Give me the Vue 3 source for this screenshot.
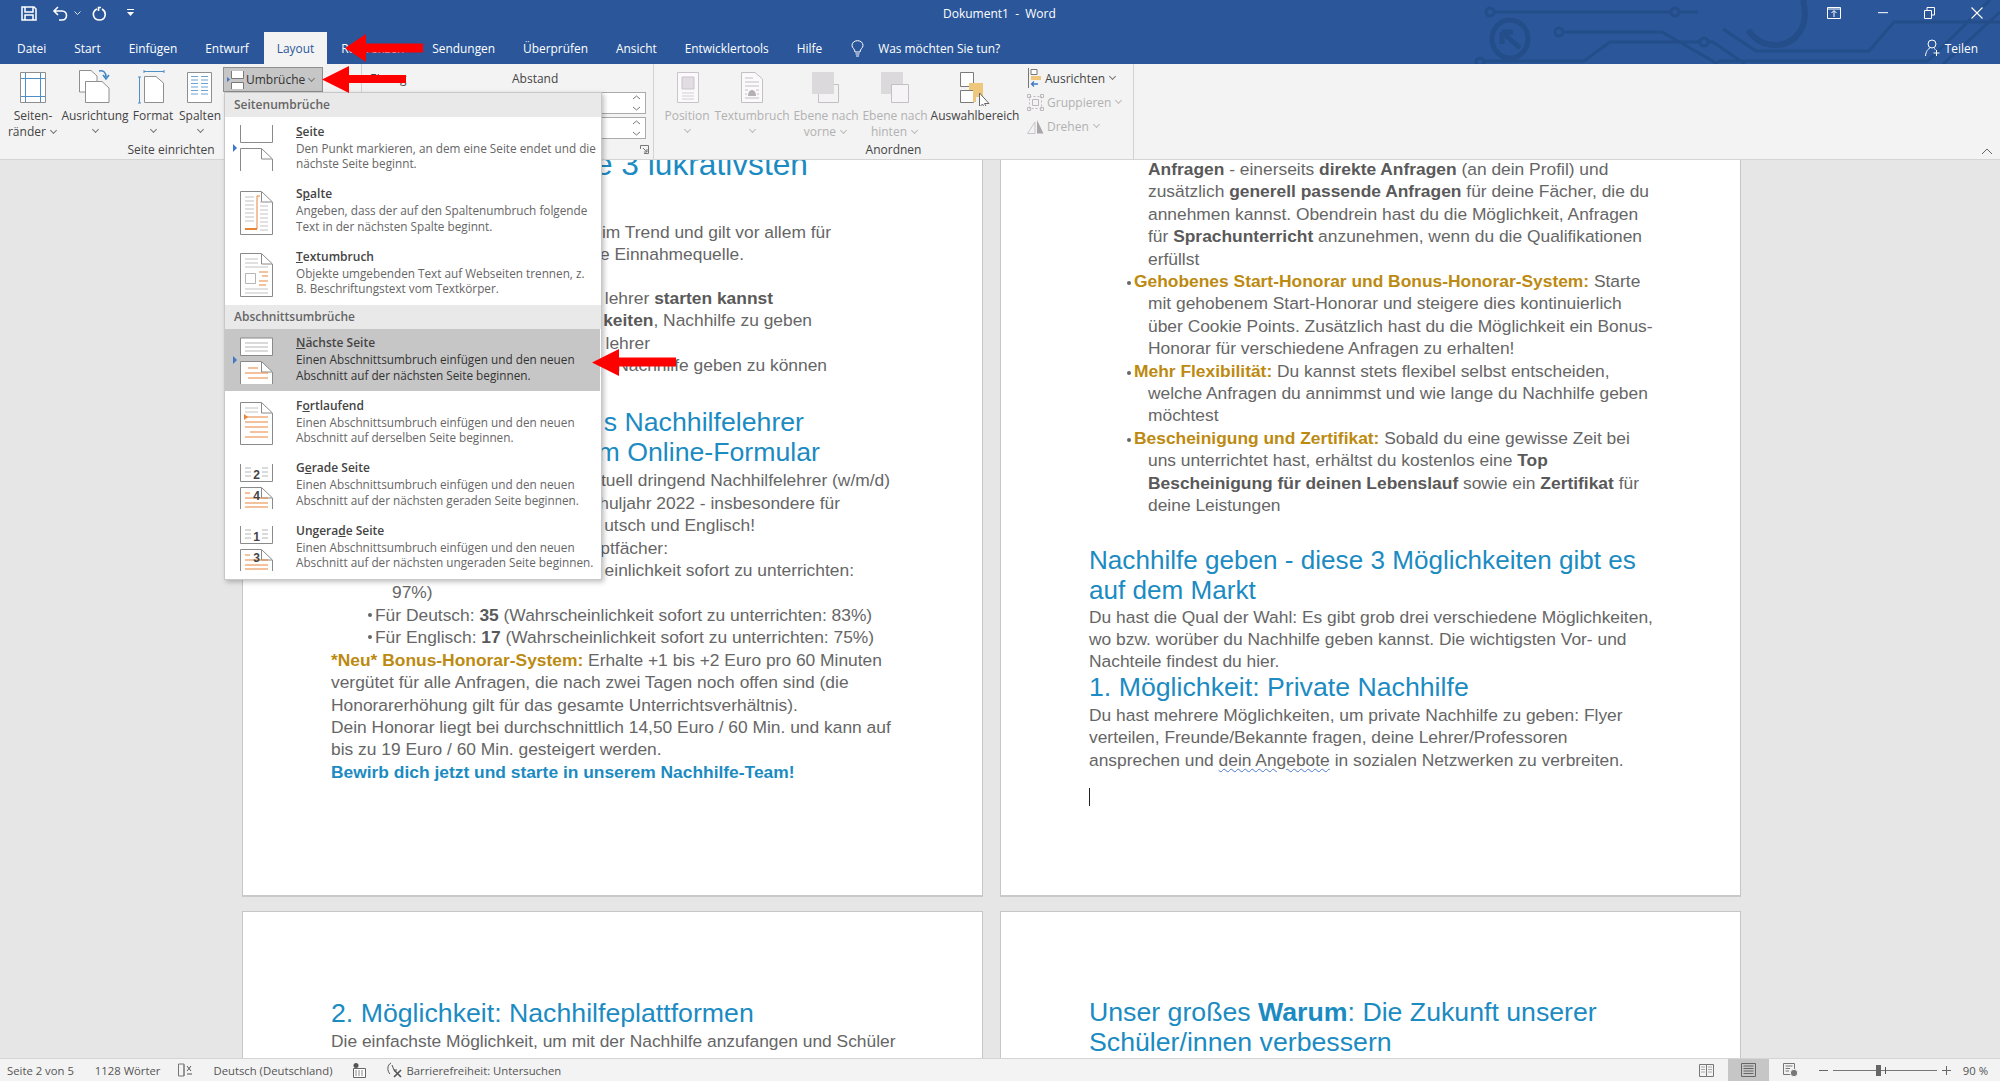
<template>
    <div class="word">
        <header class="titlebar">
            <svg class="circuit" width="560" height="64" viewBox="1440 0 560 64" fill="none">
                <g stroke="#244e8a" stroke-width="3">
                    <circle cx="1490" cy="12" r="4" />
                    <path d="M1494 12H1671" />
                    <circle cx="1675" cy="12" r="4" />
                    <path d="M1679 12H1698" />
                    <ellipse cx="1510" cy="39" rx="18" ry="19" stroke-width="5" />
                    <path d="M1502 32L1520 48M1502 32h11M1502 32v12" stroke-width="5" />
                    <circle cx="1559" cy="32" r="4" />
                    <path d="M1563 32H1662L1718 64" />
                    <circle cx="1480" cy="62" r="4" />
                    <path d="M1484 61H1584L1610 42H1700" />
                    <circle cx="1704" cy="42" r="4" />
                    <path d="M1708 42H1713L1745 64" />
                    <path d="M1803 0C1810 26 1796 45 1775 45C1764 45 1755 40 1748 30" stroke-width="6" />
                    <path d="M1723 29L1756 51H1869L1894 22H2000" />
                    <path d="M1718 61H1928L1990 0" />
                    <path d="M1943 64L2000 12" />
                </g>
            </svg>
            <div class="title-row">
                <div class="qat">
                    <svg width="16" height="15" viewBox="0 0 16 15" fill="none" stroke="#fff" stroke-width="1.5">
                        <path d="M1 1H13L15 3V14H1Z" /><path d="M4 1V6H12V1M4 14V9H12V14" />
                    </svg>
                    <svg class="undo" width="17" height="15" viewBox="0 0 17 15" fill="none" stroke="#fff" stroke-width="1.6">
                        <path d="M6 1L2 5L6 9M2 5H10C16 5 16 14 10 14H7" />
                    </svg>
                    <svg class="mini" width="7" height="4" viewBox="0 0 7 4" fill="none" stroke="#dbe4f2"><path d="M.5 .5L3.5 3.5L6.5 .5" /></svg>
                    <svg class="redo" width="15" height="15" viewBox="0 0 15 15" fill="none" stroke="#fff" stroke-width="1.6">
                        <path d="M9 1.5H6.5V5M5 3C-1 6 1 14 7.5 14C14 14 15 6 10 3" />
                    </svg>
                    <svg class="more" width="7" height="8" viewBox="0 0 7 8" fill="#fff"><path d="M0 0H7V1H0ZM0 3H7L3.5 7Z" /></svg>
                </div>
                <div class="doc-title">Dokument1&nbsp; -&nbsp; Word</div>
                <div class="window-btns">
                    <svg width="14" height="12" viewBox="0 0 14 12" fill="none" stroke="#fff"><path d="M.5 .5H13.5V11.5H.5ZM1 2H13" /><path d="M7 10V4M4.5 6L7 3.5L9.5 6" /></svg>
                    <svg width="10" height="2" viewBox="0 0 10 2" fill="#dbe4f2"><path d="M0 0H10V1.2H0Z" /></svg>
                    <svg width="11" height="12" viewBox="0 0 11 12" fill="none" stroke="#fff"><path d="M.5 3.5H7.5V11.5H.5Z" /><path d="M3 3V.5H10.5V8H8" /></svg>
                    <svg width="12" height="12" viewBox="0 0 12 12" fill="none" stroke="#fff" stroke-width="1.1"><path d="M.5 .5L11.5 11.5M11.5 .5L.5 11.5" /></svg>
                </div>
            </div>
            <nav class="tabs">
                <span v-for="tab in tabs" :key="tab" class="tab" :class="{ active: tab === 'Layout' }">{{ tab }}</span>
                <svg class="bulb" width="13" height="17" viewBox="0 0 13 17" fill="none" stroke="#fff">
                    <path d="M4 12C4 9 1 8 1 5.5C1 2.5 3.5 .7 6.5 .7C9.5 .7 12 2.5 12 5.5C12 8 9 9 9 12ZM4.5 14H8.5M5 16H8" />
                </svg>
                <span class="tell-me">Was möchten Sie tun?</span>
                <span class="share">
                    <svg width="16" height="18" viewBox="0 0 16 18" fill="none" stroke="#fff">
                        <circle cx="7" cy="5" r="4" /><path d="M.5 17C1 12 3 10 5 9M9 9.5L10.5 10.5M11.5 11V17M8.5 14H14.5" />
                    </svg>
                    Teilen
                </span>
            </nav>
        </header>

        <section class="ribbon">
            <div class="group group-page">
                <div class="group-body">
                    <div class="big-btn page-btn w-58">
                        <svg width="26" height="38" viewBox="0 0 26 38" fill="none">
                            <path d="M.5 4.5H25.5V34.5H.5Z" fill="#fff" stroke="#8f8f8f" />
                            <path d="M5.5 5V34M20.5 5V34M1 10.5H25M1 28.5H25" stroke="#4f8fc7" />
                        </svg>
                        <span>Seiten-</span>
                        <span>ränder <i class="chev"></i></span>
                    </div>
                    <div class="big-btn page-btn w-66">
                        <svg width="34" height="38" viewBox="0 0 34 38" fill="none">
                            <path d="M1.5 2.5H13L19 8V24H1.5Z" fill="#fff" stroke="#8f8f8f" />
                            <path d="M7.5 13.5H24L31 20V34.5H7.5Z" fill="#fff" stroke="#8f8f8f" />
                            <path d="M21 3C25 2 28 4 28 9M25 7L28 11L31 7" stroke="#3f86c6" stroke-width="1.6" />
                        </svg>
                        <span>Ausrichtung</span>
                        <i class="chev solo"></i>
                    </div>
                    <div class="big-btn page-btn w-50">
                        <svg width="30" height="38" viewBox="0 0 30 38" fill="none">
                            <path d="M6.5 8.5H18L25.5 15V34.5H6.5Z" fill="#fff" stroke="#8f8f8f" />
                            <path d="M1.5 9V35M0 9H3M0 35H3M6 3.5H26M6 2V5M26 2V5" stroke="#4f8fc7" />
                        </svg>
                        <span>Format</span>
                        <i class="chev solo"></i>
                    </div>
                    <div class="big-btn page-btn w-44">
                        <svg width="26" height="38" viewBox="0 0 26 38" fill="none">
                            <path d="M.5 4.5H24.5V34.5H.5Z" fill="#fff" stroke="#8f8f8f" />
                            <path d="M4 12H11M14 12H21M4 15.500H11M14 15.500H21M4 19H11M14 19H21M4 22.500H11M14 22.500H21M4 26H11M14 26H21M4 8.500H11M14 8.500H21" stroke="#6ba3d3" />
                        </svg>
                        <span>Spalten</span>
                        <i class="chev solo"></i>
                    </div>
                    <div class="break-col">
                        <div class="break-btn">
                            <svg width="17" height="20" viewBox="0 0 17 20" fill="none">
                                <path d="M0 7L3 9.500L0 12Z" fill="#3f78c4" />
                                <path d="M4.500 1V8.500H16.500V1M4.500 19V12.500H16.500V19" stroke="#7a7a7a" fill="#fff" />
                            </svg>
                            <span>Umbrüche</span>
                            <i class="chev"></i>
                        </div>
                    </div>
                </div>
                <div class="group-label label-page">Seite einrichten</div>
            </div>

            <div class="group group-para">
                <div class="group-body para-body">
                    <div v-for="col in paraCols" :key="col" class="para-col">
                        <div class="para-title">{{ col }}</div>
                        <div v-for="n in 2" :key="n" class="spin">
                            <svg width="9" height="18" viewBox="0 0 9 18" fill="none" stroke="#777"><path d="M1 5L4.500 2L8 5M1 13L4.500 16L8 13" /></svg>
                        </div>
                    </div>
                </div>
                <div class="group-label">
                    <svg class="launcher" width="9" height="9" viewBox="0 0 9 9" fill="none" stroke="#777"><path d="M.5 4V.5H8.500V8.500H4M3 3L7 7M7 4V7H4" /></svg>
                </div>
            </div>

            <div class="group group-arrange">
                <div class="group-body arrange-body">
                    <div class="big-btn off w-54">
                        <svg width="26" height="38" viewBox="0 0 26 38" fill="none">
                            <path d="M3.500 4.500H24.500V34.500H3.500Z" fill="#fbf9fb" stroke="#c9c4c9" />
                            <path d="M8 9H20V21H8Z" fill="#e2dde2" stroke="#c9c4c9" />
                            <path d="M8 25H20M8 28H20M8 31H20" stroke="#d3ced3" />
                        </svg>
                        <span>Position</span>
                        <i class="chev solo"></i>
                    </div>
                    <div class="big-btn off w-76">
                        <svg width="24" height="38" viewBox="0 0 24 38" fill="none">
                            <path d="M1.500 4.500H15L22.500 11V34.500H1.500Z" fill="#fbf9fb" stroke="#c4bfc4" />
                            <path d="M5 10H13M5 14H19M5 18H19M5 22H8M16 22H19M5 26H7M17 26H19M5 30H19" stroke="#c4bfc4" />
                            <path d="M8 28C8 20 16 20 16 28Z" fill="#b5b0b5" />
                        </svg>
                        <span>Textumbruch</span>
                        <i class="chev solo"></i>
                    </div>
                    <div class="big-btn off w-72">
                        <svg width="30" height="38" viewBox="0 0 30 38" fill="none">
                            <path d="M7.500 16.500H27.500V34.500H7.500Z" fill="#f3f3f3" stroke="#c4bfc4" />
                            <path d="M1 4H23V26H1Z" fill="#dcd9dc" />
                        </svg>
                        <span>Ebene nach</span>
                        <span>vorne <i class="chev"></i></span>
                    </div>
                    <div class="big-btn off w-66">
                        <svg width="30" height="38" viewBox="0 0 30 38" fill="none">
                            <path d="M1 4H23V26H1Z" fill="#dcd9dc" />
                            <path d="M11.500 16.500H28.500V34.500H11.500Z" fill="#f7f4f7" stroke="#c4bfc4" />
                        </svg>
                        <span>Ebene nach</span>
                        <span>hinten <i class="chev"></i></span>
                    </div>
                    <div class="big-btn w-94">
                        <svg width="30" height="38" viewBox="0 0 30 38" fill="none">
                            <path d="M.5 4.500H13.500V18.500H.5ZM.5 22.500H13.500V34.500H.5Z" fill="#fff" stroke="#7b7b7b" />
                            <path d="M9 15H23V29H16V34H13V22H9Z" fill="#eec67c" />
                            <path d="M19.500 25V39L22.500 36L25 41L27 40L24.500 35.500H29Z" fill="#fff" stroke="#666" />
                        </svg>
                        <span>Auswahlbereich</span>
                    </div>
                    <div class="small-col">
                        <div class="small-btn">
                            <svg width="15" height="20" viewBox="0 0 15 20" fill="none">
                                <path d="M1.500 0V20" stroke="#777" />
                                <path d="M4 1.500H10V6.500H4Z" fill="#fff" stroke="#777" />
                                <path d="M4 8H14V12H4Z" fill="#eec67c" />
                                <path d="M11 16H4.500M7 13.500L4.500 16L7 18.500" stroke="#3f78c4" stroke-width="1.300" />
                            </svg>
                            <span>Ausrichten</span>
                            <i class="chev"></i>
                        </div>
                        <div class="small-btn off">
                            <svg width="17" height="17" viewBox="0 0 17 17" fill="none" stroke="#bdb8bd">
                                <path d="M2.500 2.500H14.500V14.500H2.500Z" stroke-dasharray="2 2" />
                                <path d="M.5 .5H3.500V3.500H.5ZM13.500 .5H16.500V3.500H13.500ZM.5 13.500H3.500V16.500H.5ZM13.500 13.500H16.500V16.500H13.500ZM5.500 5.500H11.500V11.500H5.500Z" />
                            </svg>
                            <span>Gruppieren</span>
                            <i class="chev"></i>
                        </div>
                        <div class="small-btn off">
                            <svg width="17" height="15" viewBox="0 0 17 15">
                                <path d="M.5 14.500H8V3Z" fill="none" stroke="#c9c4c9" />
                                <path d="M10 1L16.500 14.500H10Z" fill="#a9a5a9" />
                            </svg>
                            <span>Drehen</span>
                            <i class="chev"></i>
                        </div>
                    </div>
                </div>
                <div class="group-label">Anordnen</div>
            </div>

            <svg class="collapse" width="12" height="7" viewBox="0 0 12 7" fill="none" stroke="#666"><path d="M1 6L6 1L11 6" /></svg>
        </section>

        <main class="doc">
            <div class="pages">
                <article class="page page-left">
                    <h2 class="first-head"><span class="tail" :style="tailWidth(807)">e 3 lukrativsten</span></h2>

                    <div class="gap-42">
                        <p v-for="row in introRows" :key="row.end" class="tail" :style="tailWidth(row.end)">{{ row.text }}</p>
                    </div>

                    <div class="gap-21">
                        <p class="tail" :style="tailWidth(772)">lehrer <b>starten kannst</b></p>
                        <p class="tail" :style="tailWidth(811)"><b>keiten</b>, Nachhilfe zu geben</p>
                        <p class="tail" :style="tailWidth(649)">lehrer</p>
                        <p class="tail" :style="tailWidth(826)">Nachhilfe geben zu können</p>
                    </div>

                    <h2 class="gap-31"><span class="tail" :style="tailWidth(803)">s Nachhilfelehrer</span></h2>
                    <h2><span class="tail" :style="tailWidth(819)">m Online-Formular</span></h2>

                    <div class="gap-2">
                        <p v-for="row in offerRows" :key="row.end" class="tail" :style="tailWidth(row.end)">{{ row.text }}</p>
                        <p class="indent-61">97%)</p>
                        <p class="sub-item"><i class="dot"></i>Für Deutsch: <b>35</b> (Wahrscheinlichkeit sofort zu unterrichten: 83%)</p>
                        <p class="sub-item"><i class="dot"></i>Für Englisch: <b>17</b> (Wahrscheinlichkeit sofort zu unterrichten: 75%)</p>
                        <p><b class="gold">*Neu* Bonus-Honorar-System:</b> Erhalte +1 bis +2 Euro pro 60 Minuten</p>
                        <p>vergütet für alle Anfragen, die nach zwei Tagen noch offen sind (die</p>
                        <p>Honorarerhöhung gilt für das gesamte Unterrichtsverhältnis).</p>
                        <p>Dein Honorar liegt bei durchschnittlich 14,50 Euro / 60 Min. und kann auf</p>
                        <p>bis zu 19 Euro / 60 Min. gesteigert werden.</p>
                        <p><b class="blue">Bewirb dich jetzt und starte in unserem Nachhilfe-Team!</b></p>
                    </div>
                </article>

                <article class="page page-right">
                    <div class="benefits">
                        <p class="cont"><b>Anfragen</b> - einerseits <b>direkte Anfragen</b> (an dein Profil) und</p>
                        <p class="cont">zusätzlich <b>generell passende Anfragen</b> für deine Fächer, die du</p>
                        <p class="cont">annehmen kannst. Obendrein hast du die Möglichkeit, Anfragen</p>
                        <p class="cont">für <b>Sprachunterricht</b> anzunehmen, wenn du die Qualifikationen</p>
                        <p class="cont">erfüllst</p>
                        <p class="item"><i class="dot"></i><b class="gold">Gehobenes Start-Honorar und Bonus-Honorar-System:</b> Starte</p>
                        <p class="cont">mit gehobenem Start-Honorar und steigere dies kontinuierlich</p>
                        <p class="cont">über Cookie Points. Zusätzlich hast du die Möglichkeit ein Bonus-</p>
                        <p class="cont">Honorar für verschiedene Anfragen zu erhalten!</p>
                        <p class="item"><i class="dot"></i><b class="gold">Mehr Flexibilität:</b> Du kannst stets flexibel selbst entscheiden,</p>
                        <p class="cont">welche Anfragen du annimmst und wie lange du Nachhilfe geben</p>
                        <p class="cont">möchtest</p>
                        <p class="item"><i class="dot"></i><b class="gold">Bescheinigung und Zertifikat:</b> Sobald du eine gewisse Zeit bei</p>
                        <p class="cont">uns unterrichtet hast, erhältst du kostenlos eine <b>Top</b></p>
                        <p class="cont"><b>Bescheinigung für deinen Lebenslauf</b> sowie ein <b>Zertifikat</b> für</p>
                        <p class="cont">deine Leistungen</p>
                    </div>
                    <h2 class="gap-29 head-small">Nachhilfe geben - diese 3 Möglichkeiten gibt es<br />auf dem Markt</h2>
                    <p class="gap-1">Du hast die Qual der Wahl: Es gibt grob drei verschiedene Möglichkeiten,<br />wo bzw. worüber du Nachhilfe geben kannst. Die wichtigsten Vor- und<br />Nachteile findest du hier.</p>
                    <h2 class="gap-neg">1. Möglichkeit: Private Nachhilfe</h2>
                    <p class="gap-2">Du hast mehrere Möglichkeiten, um private Nachhilfe zu geben: Flyer<br />verteilen, Freunde/Bekannte fragen, deine Lehrer/Professoren<br />ansprechen und <span class="squiggle">dein Angebote</span> in sozialen Netzwerken zu verbreiten.</p>
                    <div class="caret"></div>
                </article>

                <article class="page page-next">
                    <h2>2. Möglichkeit: Nachhilfeplattformen</h2>
                    <p class="gap-2">Die einfachste Möglichkeit, um mit der Nachhilfe anzufangen und Schüler</p>
                </article>

                <article class="page page-next next-right">
                    <h2>Unser großes <b>Warum</b>: Die Zukunft unserer<br />Schüler/innen verbessern</h2>
                </article>
            </div>
        </main>

        <footer class="status">
            <span class="st-pages">Seite 2 von 5</span>
            <span class="st-words">1128 Wörter</span>
            <svg class="st-book" width="15" height="14" viewBox="0 0 15 14" fill="none" stroke="#777"><path d="M.5 1H6V13H.5ZM6 1.500V13" /><path d="M9 3L13 8M13 3L9 8M9 11H14" stroke="#555" /></svg>
            <span class="st-lang">Deutsch (Deutschland)</span>
            <svg class="st-macro" width="13" height="15" viewBox="0 0 13 15"><circle cx="3" cy="2.500" r="2.500" fill="#555" /><path d="M.5 5.500H12.500V14.500H.5Z" fill="#fff" stroke="#666" /><path d="M2 8H11M2 10H11M2 12H11" stroke="#888" stroke-dasharray="2 1" /></svg>
            <svg class="st-access" width="17" height="16" viewBox="0 0 17 16" fill="none" stroke="#555"><path d="M5 1C1 3 1 9 4 12M6 3L8 8H11" /><path d="M8 8L15 15M15 8L8 15" stroke-width="1.600" /></svg>
            <span class="st-check">Barrierefreiheit: Untersuchen</span>

            <div class="st-right">
                <svg class="view" width="15" height="14" viewBox="0 0 15 14" fill="none" stroke="#777"><path d="M.5 1.500H7.500V13.500H.5ZM7.500 1.500H14.500V13.500H7.500Z" /><path d="M2 4H6M2 6.500H6M2 9H6M9 4H13M9 6.500H13M9 9H13" stroke="#aaa" /></svg>
                <div class="view-active">
                    <svg width="15" height="14" viewBox="0 0 15 14" fill="none" stroke="#666"><path d="M.5 .5H14.500V13.500H.5Z" /><path d="M2.500 3H12.500M2.500 5.500H12.500M2.500 8H12.500M2.500 10.500H12.500" /></svg>
                </div>
                <svg class="view" width="15" height="14" viewBox="0 0 15 14" fill="none" stroke="#777"><path d="M.5 .5H11.500V11.500H.5ZM2.500 3H9.500M2.500 5.500H7M2.500 8H6" /><circle cx="11" cy="10" r="3.700" fill="#777" stroke="#f3f3f3" /></svg>
                <span class="zoom-sign minus"></span>
                <div class="slider"><i class="thumb"></i><i class="tick"></i></div>
                <span class="zoom-sign plus"></span>
                <span class="zoom-value">90 %</span>
            </div>
        </footer>

        <div class="break-menu">
            <template v-for="section in menu" :key="section.name">
                <div class="menu-head">{{ section.name }}</div>
                <div v-for="item in section.items" :key="item.key + item.rest" class="menu-item" :class="{ hot: item.hot }">
                    <span class="menu-mark"><i v-if="item.mark" class="mark"></i></span>
                    <svg class="menu-icon" width="34" height="50" viewBox="0 0 34 50" fill="none" stroke="#8a8a8a">
                        <template v-if="item.icon === 'page'">
                            <path d="M.5 2V19.500H32.500V2" />
                            <path d="M.5 48V25.500H21.500L32.500 36V48M21.500 26V36H32" />
                        </template>
                        <template v-else-if="item.icon === 'column'">
                            <path d="M.5 5.500H21.500L32.500 16V48.500H.5ZM21.500 6V16H32" fill="#fff" />
                            <path d="M5 11H14M5 15H14M5 19H14M5 23H14M5 27H14M5 31H14M5 35H14M20 16H28M20 20H28M20 24H28M20 28H28M20 32H28M20 36H28M20 40H28M20 44H28" stroke="#c2c2c2" />
                            <path d="M17 10V43M17 10H20" stroke="#e8833a" />
                            <path d="M5 43H17" stroke="#e8833a" stroke-width="2" />
                        </template>
                        <template v-else-if="item.icon === 'wrap'">
                            <path d="M.5 5.500H21.500L32.500 16V48.500H.5ZM21.500 6V16H32" fill="#fff" />
                            <path d="M5 11H18M5 15H18M5 19H28M5 41H28M5 45H28" stroke="#c2c2c2" />
                            <path d="M5.500 25.500H15.500V35.500H5.500Z" stroke="#b5b5b5" />
                            <path d="M19 24H28M22 28H28M19 33H28M19 37H26" stroke="#e8833a" />
                        </template>
                        <template v-else-if="item.icon === 'next'">
                            <path d="M.5 3V20.500H32.500V3Z" fill="#fff" />
                            <path d="M5 8H28M5 12H28M5 16H28" stroke="#b5b5b5" />
                            <path d="M.5 49V26.500H21.500L32.500 37V49Z" fill="#fff" stroke-opacity="0" />
                            <path d="M.5 49V26.500H21.500L32.500 37V49M21.500 27V37H32" />
                            <path d="M8 33H18M5 38H28M8 43H28" stroke="#e8833a" />
                        </template>
                        <template v-else-if="item.icon === 'flow'">
                            <path d="M.5 5.500H21.500L32.500 16V47.500H.5ZM21.500 6V16H32" fill="#fff" />
                            <path d="M5 11H18M5 15H18" stroke="#c2c2c2" />
                            <path d="M5 20H28M5 25H28M5 30H28M10 35H28M5 40H28" stroke="#e8833a" />
                            <path d="M4 17V23L8 20Z" fill="#e8833a" stroke="none" />
                        </template>
                        <template v-else>
                            <path d="M.5 4V21.500H32.500V4" />
                            <path d="M5 8H11M22 8H28M5 12H11M22 12H28M5 16H11M22 16H28" stroke="#b5b5b5" />
                            <text x="16.500" y="19" class="icon-num">{{ item.nums[0] }}</text>
                            <path d="M.5 49V27.500H21.500L32.500 38V49M21.500 28V38H32" />
                            <path d="M5 33H10M5 43H28M5 47H28M5 38H28" stroke="#e8833a" />
                            <text x="16.500" y="40" class="icon-num">{{ item.nums[1] }}</text>
                        </template>
                    </svg>
                    <div class="menu-text">
                        <div class="menu-title">{{ item.pre }}<u>{{ item.key }}</u>{{ item.rest }}</div>
                        <div class="menu-desc">{{ item.lines[0] }}<br />{{ item.lines[1] }}</div>
                    </div>
                </div>
            </template>
        </div>

        <svg class="arrow arrow-tab" width="78" height="28" viewBox="0 0 78 28" fill="#f00"><path d="M0 14L21 0V9.500H78V18.500H21V28Z" /></svg>
        <svg class="arrow arrow-break" width="84" height="27" viewBox="0 0 84 27" fill="#f00"><path d="M0 13.500L27 0V9H84V17H27V27Z" /></svg>
        <svg class="arrow arrow-next" width="84" height="27" viewBox="0 0 84 27" fill="#f00"><path d="M0 13.500L27 0V8.500H84V17.500H27V27Z" /></svg>
    </div>
</template>

<script setup>
const tabs = ['Datei', 'Start', 'Einfügen', 'Entwurf', 'Layout', 'Referenzen', 'Sendungen', 'Überprüfen', 'Ansicht', 'Entwicklertools', 'Hilfe'];
const paraCols = ['Einzug', 'Abstand'];

// left edge of the body text, the lines of page 1 that run under the menu are anchored on their right end
const textLeft = 330;
const tailWidth = (end) => ({ width: `${end - textLeft}px` });

const introRows = [
    { end: 830, text: 'im Trend und gilt vor allem für' },
    { end: 743, text: 'e Einnahmequelle.' }
];

const offerRows = [
    { end: 889, text: 'tuell dringend Nachhilfelehrer (w/m/d)' },
    { end: 839, text: 'huljahr 2022 - insbesondere für' },
    { end: 754, text: 'utsch und Englisch!' },
    { end: 667, text: 'ptfächer:' },
    { end: 853, text: 'einlichkeit sofort zu unterrichten:' }
];

const desc = 'Einen Abschnittsumbruch einfügen und den neuen';

const menu = [
    {
        name: 'Seitenumbrüche',
        items: [
            { pre: '', key: 'S', rest: 'eite', icon: 'page', mark: true, lines: ['Den Punkt markieren, an dem eine Seite endet und die', 'nächste Seite beginnt.'] },
            { pre: 'S', key: 'p', rest: 'alte', icon: 'column', lines: ['Angeben, dass der auf den Spaltenumbruch folgende', 'Text in der nächsten Spalte beginnt.'] },
            { pre: '', key: 'T', rest: 'extumbruch', icon: 'wrap', lines: ['Objekte umgebenden Text auf Webseiten trennen, z.', 'B. Beschriftungstext vom Textkörper.'] }
        ]
    },
    {
        name: 'Abschnittsumbrüche',
        items: [
            { pre: '', key: 'N', rest: 'ächste Seite', icon: 'next', mark: true, hot: true, lines: [desc, 'Abschnitt auf der nächsten Seite beginnen.'] },
            { pre: 'F', key: 'o', rest: 'rtlaufend', icon: 'flow', lines: [desc, 'Abschnitt auf derselben Seite beginnen.'] },
            { pre: 'G', key: 'e', rest: 'rade Seite', icon: 'num', nums: ['2', '4'], lines: [desc, 'Abschnitt auf der nächsten geraden Seite beginnen.'] },
            { pre: 'Ungera', key: 'd', rest: 'e Seite', icon: 'num', nums: ['1', '3'], lines: [desc, 'Abschnitt auf der nächsten ungeraden Seite beginnen.'] }
        ]
    }
];
</script>

<style>
html,
body {
    margin: 0;
    background: #e6e6e6;
}
</style>

<style scoped>
.word {
    position: relative;
    display: flex;
    flex-direction: column;
    width: 2000px;
    height: 1081px;
    overflow: hidden;
    font-family: 'Open Sans', sans-serif;
    font-size: 12px;
    color: #444;
}

/* title bar and tabs */
.titlebar {
    position: relative;
    flex: none;
    height: 64px;
    background: #2b579a;
    color: #fff;
}

.circuit {
    position: absolute;
    top: 0;
    right: 0;
}

.title-row {
    position: relative;
    display: flex;
    align-items: center;
    height: 32px;
    padding-bottom: 6px;
    box-sizing: border-box;
}

.qat {
    flex: none;
    display: flex;
    align-items: center;
    width: 943px;
    padding-left: 21px;
    box-sizing: border-box;
}

.undo {
    margin-left: 15px;
}

.mini {
    margin-left: 5px;
}

.redo {
    margin-left: 11px;
}

.more {
    margin-left: 20px;
}

.doc-title {
    flex: none;
    width: 113px;
    white-space: nowrap;
}

.window-btns {
    flex: none;
    display: flex;
    align-items: center;
    margin-left: 771px;
}

.window-btns svg {
    flex: none;
    margin-right: 36px;
}

.window-btns svg:first-child {
    margin-right: 37px;
}

.tabs {
    position: relative;
    display: flex;
    align-items: center;
    height: 32px;
    padding-left: 3px;
    font-size: 11.9px;
}

.tab {
    display: flex;
    align-items: center;
    height: 32px;
    padding: 0 14px;
    white-space: nowrap;
}

.tab.active {
    padding: 0 13px;
    margin-left: 1px;
    background: #f3f3f3;
    color: #2b579a;
}

.bulb {
    margin-left: 15px;
}

.tell-me {
    margin-left: 14px;
}

.share {
    display: flex;
    align-items: center;
    gap: 4px;
    margin-left: auto;
    margin-right: 22px;
}

/* ribbon */
.ribbon {
    position: relative;
    display: flex;
    flex: none;
    height: 96px;
    box-sizing: border-box;
    background: #f3f3f3;
    border-bottom: 1px solid #d4d4d4;
}

.group {
    display: flex;
    flex-direction: column;
    box-sizing: border-box;
    height: 95px;
    padding-bottom: 1px;
}

.group-page {
    width: 361px;
}

.group-para {
    position: relative;
    width: 293px;
    border-left: 1px solid #d2d2d2;
    border-right: 1px solid #d2d2d2;
}

.group-arrange {
    width: 480px;
    border-right: 1px solid #d2d2d2;
}

.group-body {
    display: flex;
    flex: 1;
    padding-top: 4px;
    box-sizing: border-box;
}

.group-page .group-body {
    padding-left: 4px;
}

.group-label {
    height: 19px;
    line-height: 19px;
    text-align: center;
}

.label-page {
    padding-right: 19px;
}

.launcher {
    position: absolute;
    right: 4px;
    bottom: 5px;
}

.big-btn {
    display: flex;
    flex-direction: column;
    align-items: center;
    line-height: 16px;
    white-space: nowrap;
    color: #444;
}

.big-btn svg {
    flex: none;
    margin-bottom: 2px;
}

.big-btn.off,
.small-btn.off {
    color: #b1b1b1;
}

.w-44 { width: 44px; }
.w-50 { width: 50px; }
.w-54 { width: 54px; }
.w-58 { width: 58px; }
.w-66 { width: 66px; }
.w-72 { width: 72px; }
.w-76 { width: 76px; }
.w-94 { width: 94px; }

.chev {
    display: inline-block;
    width: 4px;
    height: 4px;
    margin: 0 2px 3px;
    border-right: 1px solid #777;
    border-bottom: 1px solid #777;
    transform: rotate(45deg);
}

.off .chev {
    border-color: #bbb;
}

.chev.solo {
    margin-top: 3px;
}

.break-col {
    margin-left: 1px;
}

.break-btn {
    display: flex;
    align-items: center;
    gap: 2px;
    width: 100px;
    height: 25px;
    margin-top: -1px;
    padding-left: 3px;
    box-sizing: border-box;
    background: #c6c6c6;
    border: 1px solid #8f8f8f;
    color: #333;
    white-space: nowrap;
}

.para-body {
    gap: 8px;
    padding: 4px 0 0 8px;
}

.para-col {
    width: 134px;
}

.para-title {
    height: 24px;
    line-height: 22px;
}

.spin {
    display: flex;
    align-items: center;
    justify-content: flex-end;
    height: 22px;
    margin-bottom: 3px;
    padding-right: 4px;
    box-sizing: border-box;
    background: #fff;
    border: 1px solid #ababab;
}

.arrange-body {
    padding-left: 6px;
}

.small-col {
    margin: -2px 0 0 5px;
}

.small-btn {
    display: flex;
    align-items: center;
    gap: 3px;
    height: 24px;
    white-space: nowrap;
    color: #444;
}

.collapse {
    position: absolute;
    right: 7px;
    bottom: 4px;
}

/* document */
.doc {
    flex: 1;
    min-height: 0;
    overflow: hidden;
    background: #e6e6e6;
}

.pages {
    display: grid;
    grid-template-columns: 741px 741px;
    grid-template-rows: 737px 200px;
    column-gap: 17px;
    row-gap: 14px;
    padding-left: 242px;
    font-family: 'Liberation Sans', Arial, sans-serif;
    font-size: 17.4px;
    line-height: 22.4px;
    color: #666;
    white-space: nowrap;
}

.page {
    box-sizing: border-box;
    padding: 0 88px;
    background: #fff;
    border: 1px solid #c6c6c6;
    border-top: 0;
    border-bottom: 2px solid #c9c9c9;
    overflow: hidden;
}

.page-next {
    padding-top: 86px;
    border-top: 1px solid #c6c6c6;
    border-bottom: 0;
}

.next-right {
    padding-top: 85px;
}

p {
    margin: 0;
}

b {
    color: #595959;
}

h2 {
    margin: 0;
    font-size: 26.7px;
    font-weight: 400;
    line-height: 30px;
    color: #1b8bc2;
}

h2 b {
    color: #1b8bc2;
}

.head-small {
    font-size: 26.1px;
}

.first-head {
    margin-top: -11px;
    font-size: 31.7px;
}

.tail {
    display: block;
    text-align: right;
}

.gap-1 { margin-top: 1px; }
.gap-2 { margin-top: 2px; }
.gap-21 { margin-top: 21px; }
.gap-29 { margin-top: 28px; }
.gap-31 { margin-top: 31px; }
.gap-42 { margin-top: 42px; }
.gap-neg { margin-top: -1px; }

.indent-61 {
    padding-left: 61px;
}

.sub-item {
    display: flex;
    align-items: center;
    white-space: pre;
    padding-left: 37px;
}

.dot {
    flex: none;
    display: inline-block;
    width: 4px;
    height: 4px;
    margin-right: 3px;
    border-radius: 50%;
    background: #666;
    vertical-align: 2px;
}

b.gold {
    color: #bc8a10;
}

b.blue {
    color: #1b8bc2;
}

.benefits {
    margin-top: -2px;
}

.cont {
    padding-left: 59px;
}

.item {
    padding-left: 38px;
}

.squiggle {
    text-decoration: underline wavy #4a78d0 1px;
    text-underline-offset: 2px;
}

.caret {
    width: 1px;
    height: 18px;
    margin-top: 17px;
    background: #222;
}

/* status bar */
.status {
    position: relative;
    display: flex;
    flex: none;
    align-items: center;
    height: 23px;
    box-sizing: border-box;
    background: #f3f3f3;
    border-top: 1px solid #d4d4d4;
    font-size: 11.3px;
    color: #555;
    white-space: nowrap;
}

.st-pages {
    margin-left: 7px;
}

.st-words {
    margin-left: 21px;
}

.st-book {
    margin-left: 18px;
}

.st-lang {
    margin-left: 20px;
}

.st-macro {
    margin-left: 21px;
}

.st-access {
    margin-left: 20px;
}

.st-check {
    margin-left: 3px;
}

.st-right {
    display: flex;
    align-items: center;
    height: 100%;
    margin-left: auto;
}

.view-active {
    display: flex;
    align-items: center;
    justify-content: center;
    width: 41px;
    height: 100%;
    margin: 0 14px 0 14px;
    background: #c6c6c6;
}

.zoom-sign {
    position: relative;
    width: 9px;
    height: 1px;
    margin-left: 21px;
    background: #666;
}

.zoom-sign.plus {
    margin-left: 5px;
}

.zoom-sign.plus::after {
    content: '';
    position: absolute;
    left: 4px;
    top: -4px;
    width: 1px;
    height: 9px;
    background: #666;
}

.slider {
    position: relative;
    width: 104px;
    height: 1px;
    margin-left: 5px;
    background: #777;
}

.thumb {
    position: absolute;
    left: 43px;
    top: -5px;
    width: 5px;
    height: 11px;
    background: #666;
}

.tick {
    position: absolute;
    left: 52px;
    top: -3px;
    width: 1px;
    height: 7px;
    background: #555;
}

.zoom-value {
    margin: 0 12px;
}

/* break menu */
.break-menu {
    position: absolute;
    top: 92px;
    left: 224px;
    width: 378px;
    box-sizing: border-box;
    background: #fff;
    border: 1px solid #c8c8c8;
    box-shadow: 2px 2px 5px rgba(0, 0, 0, 0.25);
}

.menu-head {
    height: 24px;
    padding-left: 9px;
    background: #e9e9e9;
    font-weight: 600;
    line-height: 24px;
    color: #666;
}

.menu-item {
    display: flex;
    align-items: center;
    height: 62.5px;
    margin-right: 1px;
}

.menu-item.hot {
    background: #c6c6c6;
}

.menu-mark {
    flex: none;
    display: flex;
    align-items: center;
    width: 15px;
    padding-left: 8px;
    box-sizing: border-box;
}

.mark {
    border-left: 4px solid #3f78c4;
    border-top: 4px solid transparent;
    border-bottom: 4px solid transparent;
}

.menu-icon {
    flex: none;
    margin-right: 22px;
}

.icon-num {
    fill: #444;
    stroke: none;
    font-family: 'Liberation Sans', sans-serif;
    font-size: 12px;
    font-weight: 700;
    text-anchor: middle;
}

.menu-text {
    margin-top: -2px;
}

.menu-title {
    margin-bottom: 1px;
    font-weight: 600;
    line-height: 17px;
    color: #444;
}

.menu-desc {
    font-size: 11.75px;
    line-height: 15.6px;
    color: #666;
    white-space: nowrap;
}

.hot .menu-desc {
    color: #333;
}

.arrow {
    position: absolute;
    pointer-events: none;
}

.arrow-tab {
    top: 34px;
    left: 345px;
}

.arrow-break {
    top: 66px;
    left: 322px;
}

.arrow-next {
    top: 349px;
    left: 592px;
}
</style>
